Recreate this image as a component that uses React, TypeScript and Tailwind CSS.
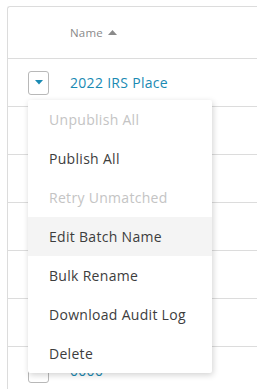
import React from "react";

const rows = ["2022 IRS Place", "", "", "", "", "", "0000"];

const items: { label: string; disabled?: boolean; active?: boolean }[] = [
  { label: "Unpublish All", disabled: true },
  { label: "Publish All" },
  { label: "Retry Unmatched", disabled: true },
  { label: "Edit Batch Name", active: true },
  { label: "Bulk Rename" },
  { label: "Download Audit Log" },
  { label: "Delete" },
];

function Caret() {
  return (
    <svg width="8" height="5" viewBox="0 0 8 5">
      <path d="M0 0 L8 0 L4 4.5 Z" fill="#1a8ab3" />
    </svg>
  );
}

export default function App() {
  return (
    <div
      className="relative h-[389px] w-[257px] overflow-hidden bg-white"
      style={{ fontFamily: "'Open Sans', Lato, sans-serif" }}
    >
      <div className="ml-[7px] mt-[6px] rounded-tl-[3px] border-l border-t border-[#dcdcdc]">
        <div className="flex h-[52px] items-center border-b border-[#dcdcdc] pl-[62px] text-[11.5px] tracking-[0.2px] text-[#8a8a8a]">
          <span>Name</span>
          <svg className="ml-[5px]" width="9" height="5" viewBox="0 0 9 5">
            <path d="M0 5 L9 5 L4.5 0 Z" fill="#8a8a8a" />
          </svg>
        </div>
        {rows.map((r, i) => (
          <div
            key={i}
            className="flex h-[48px] items-center border-b border-[#dcdcdc] pl-[20px]"
          >
            <div className="flex h-[24px] w-[21px] items-center justify-center rounded-[3px] border border-[#b8b8b8] bg-white">
              <Caret />
            </div>
            <span className="ml-[21px] text-[14px] tracking-[0.3px] text-[#1a8ab3]">{r}</span>
          </div>
        ))}
      </div>
      <div className="absolute left-[28px] top-[100px] w-[184px] rounded-[2px] bg-white shadow-[1px_2px_6px_rgba(0,0,0,0.18)]">
        {items.map((it) => (
          <div
            key={it.label}
            className={`flex h-[39px] items-center pl-[21px] text-[14px] tracking-[0.3px] ${
              it.disabled ? "text-[#c4c4c4]" : "text-[#3d3d3d]"
            } ${it.active ? "bg-[#f4f4f4]" : ""}`}
          >
            {it.label}
          </div>
        ))}
      </div>
    </div>
  );
}
